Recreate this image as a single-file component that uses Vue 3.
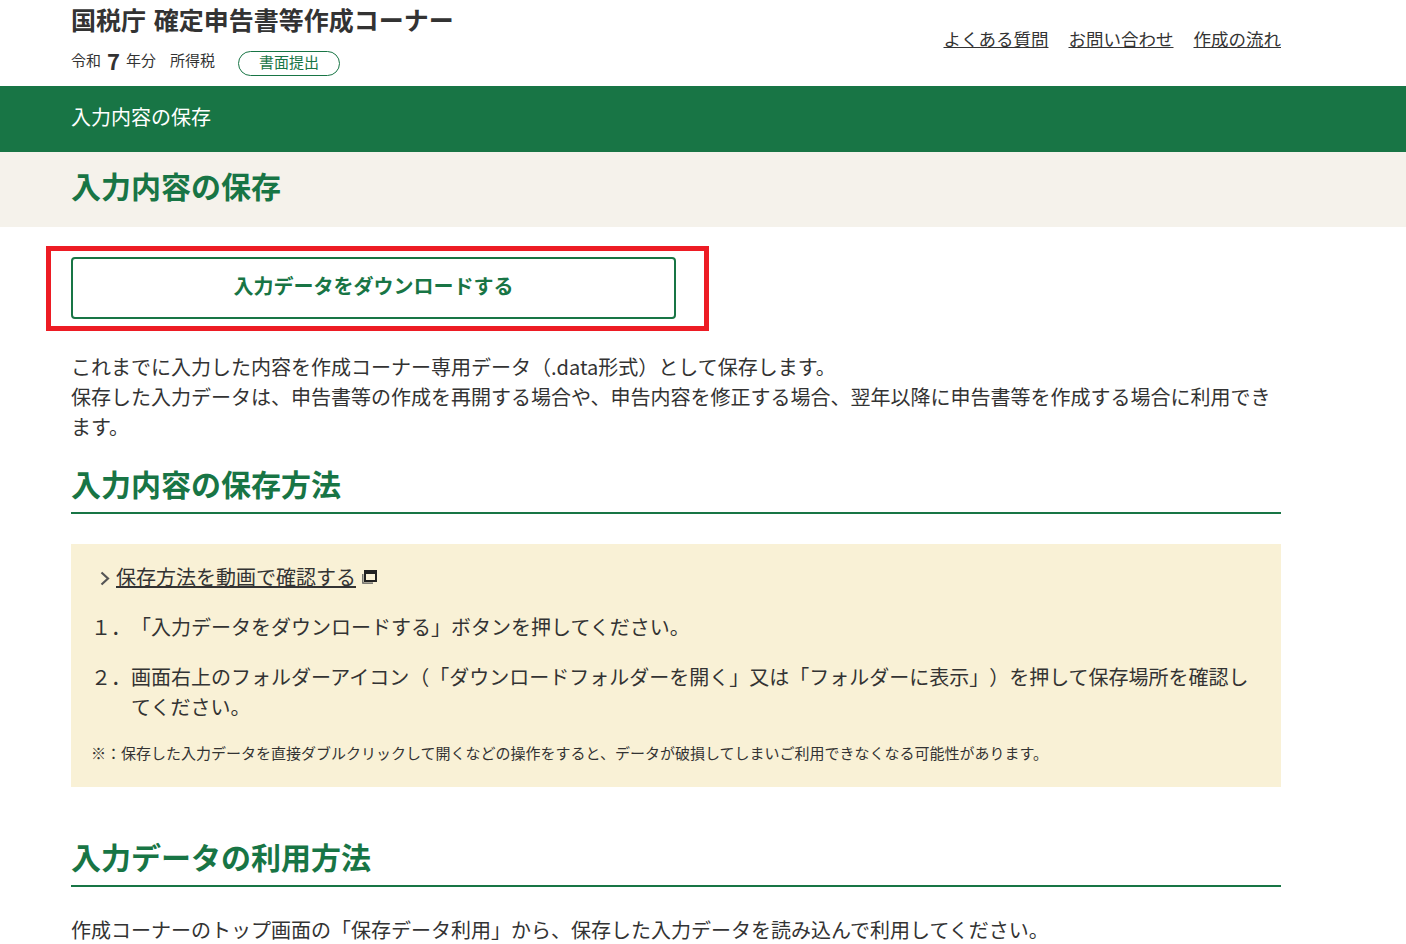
<script setup>
const links = ['よくある質問', 'お問い合わせ', '作成の流れ']
</script>

<template>
  <div class="page">
    <header class="header wrap">
      <div>
        <div class="title">国税庁 確定申告書等作成コーナー</div>
        <div class="meta">
          <span>令和</span><b class="year">7</b><span>年分</span>
          <span class="tax">所得税</span>
          <span class="pill">書面提出</span>
        </div>
      </div>
      <nav class="nav">
        <a v-for="l in links" :key="l" href="#">{{ l }}</a>
      </nav>
    </header>
    <div class="band"><div class="wrap">入力内容の保存</div></div>
    <div class="beige"><h1 class="wrap">入力内容の保存</h1></div>
    <main class="wrap main">
      <div class="btn-zone">
        <div class="red"></div>
        <button class="btn">入力データをダウンロードする</button>
      </div>
      <p class="lead">これまでに入力した内容を作成コーナー専用データ（.data形式）として保存します。<br>保存した入力データは、申告書等の作成を再開する場合や、申告内容を修正する場合、翌年以降に申告書等を作成する場合に利用できます。</p>
      <h2 class="h2 first">入力内容の保存方法</h2>
      <section class="box">
        <div class="vid">
          <svg class="chev" width="10" height="15" viewBox="0 0 10 15"><path d="M1.5 1.5 8 7.5l-6.5 6" fill="none" stroke="#555" stroke-width="2.2"/></svg>
          <a href="#">保存方法を動画で確認する</a>
          <svg class="win" width="15" height="14" viewBox="0 0 15 14"><rect x="3" y="1" width="11" height="10" fill="none" stroke="#222" stroke-width="2"/><rect x="3" y="1" width="11" height="3" fill="#222"/><path d="M.8 4v9.2H11" fill="none" stroke="#555" stroke-width="1.2"/></svg>
        </div>
        <ol class="steps">
          <li><span class="n">１．</span><span>「入力データをダウンロードする」ボタンを押してください。</span></li>
          <li><span class="n">２．</span><span>画面右上のフォルダーアイコン（「ダウンロードフォルダーを開く」又は「フォルダーに表示」）を押して保存場所を確認してください。</span></li>
        </ol>
        <p class="note">※：保存した入力データを直接ダブルクリックして開くなどの操作をすると、データが破損してしまいご利用できなくなる可能性があります。</p>
      </section>
      <h2 class="h2 second">入力データの利用方法</h2>
      <p class="last">作成コーナーのトップ画面の「保存データ利用」から、保存した入力データを読み込んで利用してください。</p>
    </main>
  </div>
</template>

<style>
html, body { margin: 0; background: #fff; overflow: hidden; }
</style>

<style scoped>
.page {
  height: 944px;
  overflow: hidden;
  color: #333;
  font-family: "Noto Sans CJK JP", "Noto Sans", sans-serif;
  font-size: 20px;
  line-height: 30px;
  text-spacing-trim: space-all;
}
.wrap { width: 1210px; margin-left: 71px; }
.header { height: 86px; display: flex; justify-content: space-between; }
.title { font-size: 25px; font-weight: 700; line-height: 38px; color: #333; word-spacing: 2px; }
.meta { display: flex; align-items: center; font-size: 15px; line-height: 24px; margin-top: 7px; height: 30px; }
.year { font-size: 22px; margin: 0 6px; }
.tax { margin-left: 14px; }
.pill {
  box-sizing: border-box;
  width: 102px; height: 25px; margin-left: 23px; margin-top: 6px;
  border: 1px solid #187545; border-radius: 13px;
  color: #187545; text-align: center; line-height: 19px;
}
.nav { display: flex; gap: 20px; padding-top: 24px; font-size: 17.5px; }
.nav a { color: #333; text-decoration: underline; }
.band { background: #187545; color: #fff; height: 66px; line-height: 62px; }
.beige { background: #f5f2eb; height: 75px; }
.beige h1 { margin-top: 0; margin-bottom: 0; margin-right: 0; padding: 0; font-size: 30px; line-height: 67px; color: #187545; font-weight: 700; }
.main { padding-top: 30px; }
.btn-zone { position: relative; height: 62px; }
.red {
  position: absolute; left: -25px; top: -11px;
  width: 663px; height: 85px; box-sizing: border-box;
  border: 5px solid #ed1c24;
}
.btn {
  position: relative; display: block; box-sizing: border-box;
  width: 605px; height: 62px; padding: 0 0 4px;
  background: #fff; border: 2px solid #187545; border-radius: 4px;
  color: #187545; font: inherit; font-weight: 700; line-height: 52px;
}
.lead { margin: 33px 0 0; }
.h2 {
  margin: 0; font-size: 30px; font-weight: 700; color: #187545; line-height: 40px;
  border-bottom: 2px solid #187545;
}
.first { margin-top: 21px; padding-bottom: 9px; }
.box { background: #f9f1d6; margin-top: 30px; padding: 18px 20px 0; height: 243px; box-sizing: border-box; }
.vid { display: flex; align-items: center; padding-left: 9px; }
.chev { margin-right: 6px; margin-top: 2px; }
.vid a { color: #333; text-decoration: underline; }
.win { margin-left: 6px; }
.steps { list-style: none; margin: 20px 0 0; padding: 0; }
.steps li { display: flex; margin-bottom: 20px; }
.n { flex: none; width: 40px; }
.note { margin: -1px 0 0; font-size: 15px; line-height: 24px; }
.second { margin-top: 49px; padding-bottom: 9px; }
.last { margin: 28px 0 0; }
</style>
